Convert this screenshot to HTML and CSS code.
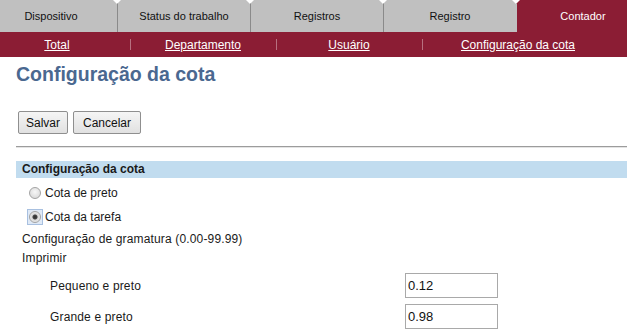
FILE: index.html
```html
<!doctype html>
<html lang="pt">
<head>
	<meta charset="UTF-8">
	<title>Configuração da cota</title>
	<link rel="stylesheet" href="styles.css">
</head>
<body>
	<div class="header">
		<ul class="tabs">
			<li>Dispositivo</li>
			<li>Status do trabalho</li>
			<li>Registros</li>
			<li>Registro</li>
			<li class="active">Contador</li>
		</ul>
		<ul class="subnav">
			<li><a href="#">Total</a></li>
			<li><a href="#">Departamento</a></li>
			<li><a href="#">Usuário</a></li>
			<li class="wide"><a href="#">Configuração da cota</a></li>
		</ul>
	</div>

	<div class="content">
		<h1>Configuração da cota</h1>
		<div class="buttons">
			<button type="button">Salvar</button>
			<button type="button" class="cancel">Cancelar</button>
		</div>
		<div class="rule"></div>

		<div class="band">Configuração da cota</div>
		<div class="radios">
			<label class="radio-row">
				<span class="radio-wrap"><input type="radio" name="quota"></span>
				Cota de preto
			</label>
			<label class="radio-row">
				<span class="radio-wrap focus"><input type="radio" name="quota" checked></span>
				Cota da tarefa
			</label>
		</div>
		<div class="text-row">Configuração de gramatura (0.00-99.99)</div>
		<div class="text-row">Imprimir</div>
		<div class="fields">
			<div class="field-row">
				<span class="field-label">Pequeno e preto</span>
				<input type="text" value="0.12">
			</div>
			<div class="field-row">
				<span class="field-label">Grande e preto</span>
				<input type="text" value="0.98">
			</div>
		</div>
	</div>
</body>
</html>
```

FILE: styles.css
```css
body {
	margin: 0;
	padding: 0;
	font-family: "Liberation Sans", Arial, sans-serif;
	font-size: 12px;
	color: #1a1a1a;
	background: #fff;
	overflow: hidden;
}
ul {
	margin: 0;
	padding: 0;
	list-style: none;
}

/* cabeçalho: a página está deslocada 16px para a esquerda */
.header {
	margin-left: -16px;
	overflow: hidden;
}
.tabs {
	display: flex;
	height: 32px;
}
.tabs li {
	flex: 0 0 133px;
	box-sizing: border-box;
	height: 32px;
	line-height: 32px;
	text-align: center;
	font-size: 11px;
	color: #111;
	background: #c0c0c0;
	border-left: 1px solid #8a8a8a;
	clip-path: polygon(4px 0, calc(100% - 4px) 0, 100% 4px, 100% 100%, 0 100%, 0 4px);
}
.tabs li:first-child {
	border-left-color: #c0c0c0;
}
.tabs li.active {
	background: #8b1d34;
	border-left-color: #c0c0c0;
	color: #fff;
}
.subnav {
	display: flex;
	height: 25px;
	background: #8b1d34;
}
.subnav li {
	flex: 0 0 146px;
	display: flex;
	align-items: center;
	justify-content: center;
	background: linear-gradient(#b7707f, #b7707f) left center / 1px 11px no-repeat;
}
.subnav li:first-child {
	background: none;
}
.subnav li.wide {
	flex-basis: 192px;
}
.subnav a {
	color: #fff;
	font-size: 12px;
	text-decoration: underline;
}

.content {
	padding-left: 16px;
}
h1 {
	margin: 6px 0 0;
	font-size: 19.5px;
	line-height: 22px;
	color: #4a6890;
}
.buttons {
	display: flex;
	gap: 5px;
	margin: 26px 0 0 2px;
}
.buttons button {
	height: 23px;
	padding: 0 7px;
	font-family: "Liberation Sans", Arial, sans-serif;
	font-size: 12px;
	color: #111;
	border: 1px solid #8f8f8f;
	border-radius: 2px;
	background: linear-gradient(#f5f5f5, #e1e1e1);
}
.buttons .cancel {
	padding: 0 9px;
}
.rule {
	margin-top: 12px;
	border-top: 1px solid #9c9c9c;
	border-bottom: 1px solid #e4e4e4;
}

.band {
	margin-top: 13px;
	height: 17px;
	line-height: 17px;
	padding-left: 6px;
	font-weight: bold;
	background: #c1dcef;
}
.radios {
	margin-top: 3px;
}
.radio-row {
	display: flex;
	align-items: center;
	height: 24px;
	padding-left: 11px;
}
.radio-wrap {
	display: inline-flex;
	padding: 1px;
	margin-right: 2px;
	border: 1px solid transparent;
}
.radio-wrap.focus {
	border-color: #a8c0e0;
	background: #dfe9f6;
}
.radio-wrap input {
	appearance: none;
	margin: 0;
	width: 12px;
	height: 12px;
	border-radius: 50%;
	border: 1px solid #a3a3a3;
	box-sizing: border-box;
	background: radial-gradient(circle at 50% 40%, #f7f7f7, #d3d3d3);
}
.radio-wrap input:checked {
	background: radial-gradient(circle, #2e2e2e 0, #444 2px, #d8d8d8 3px, #e8e8e8 5px);
}
.text-row {
	height: 19px;
	line-height: 19px;
	padding-left: 6px;
	letter-spacing: 0.15px;
}
.radios + .text-row {
	margin-top: 1px;
}
.fields {
	margin-top: 2px;
}
.field-row {
	display: flex;
	align-items: center;
	height: 31px;
	padding-left: 34px;
	letter-spacing: 0.15px;
}
.field-label {
	width: 355px;
}
.field-row input {
	box-sizing: border-box;
	width: 93px;
	height: 25px;
	padding: 0 2px;
	border: 1px solid #a9a9a9;
	font-family: "Liberation Sans", Arial, sans-serif;
	font-size: 13px;
	color: #111;
	letter-spacing: 0;
}
```
